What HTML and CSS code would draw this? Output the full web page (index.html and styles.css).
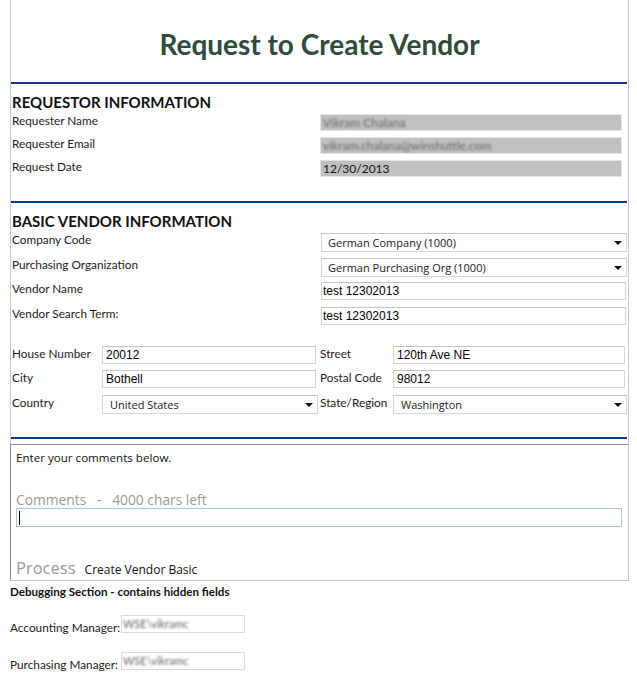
FILE: index.html
```html
<!DOCTYPE html>
<html lang="en">
<head>
  <meta charset="UTF-8" />
  <title>Request to Create Vendor</title>
  <link rel="stylesheet" href="styles.css">
</head>
<body>

  <div class="form">
    <h1 class="title">Request to Create Vendor</h1>
    <div class="rule"></div>

    <h2 class="section">REQUESTOR INFORMATION</h2>
    <div class="rows requestor">
      <div class="row">
        <label>Requester Name</label>
        <div class="readonly"><span class="blur">Vikram Chalana</span></div>
      </div>
      <div class="row">
        <label>Requester Email</label>
        <div class="readonly"><span class="blur">vikram.chalana@winshuttle.com</span></div>
      </div>
      <div class="row">
        <label>Request Date</label>
        <div class="readonly">12/30/2013</div>
      </div>
    </div>

    <div class="rule rule-2"></div>

    <h2 class="section">BASIC VENDOR INFORMATION</h2>
    <div class="rows vendor">
      <div class="row">
        <label>Company Code</label>
        <div class="select">German Company (1000)</div>
      </div>
      <div class="row">
        <label>Purchasing Organization</label>
        <div class="select">German Purchasing Org (1000)</div>
      </div>
      <div class="row">
        <label>Vendor Name</label>
        <input class="text" type="text" value="test 12302013" />
      </div>
      <div class="row">
        <label>Vendor Search Term:</label>
        <input class="text" type="text" value="test 12302013" />
      </div>
    </div>

    <div class="address">
      <label>House Number</label>
      <input class="text addr" type="text" value="20012" />
      <label class="second">Street</label>
      <input class="text addr" type="text" value="120th Ave NE" />

      <label>City</label>
      <input class="text addr" type="text" value="Bothell" />
      <label class="second">Postal Code</label>
      <input class="text addr" type="text" value="98012" />

      <label>Country</label>
      <div class="select wide">United States</div>
      <label class="second">State/Region</label>
      <div class="select wide">Washington</div>
    </div>

    <div class="rule rule-3"></div>

    <div class="comments-box">
      <div class="hint">Enter your comments below.</div>
      <div class="comments-label">Comments   -   4000 chars left</div>
      <div class="comments-input"><span class="caret"></span></div>
      <div class="process"><span class="process-label">Process</span> Create Vendor Basic</div>
    </div>
  </div>

  <div class="debug">
    <div class="debug-title">Debugging Section - contains hidden fields</div>
    <div class="debug-row">
      <label>Accounting Manager:</label>
      <div class="hidden-field"><span class="blur">WSE\vikramc</span></div>
    </div>
    <div class="debug-row">
      <label>Purchasing Manager:</label>
      <div class="hidden-field"><span class="blur">WSE\vikramc</span></div>
    </div>
  </div>

</body>
</html>
```

FILE: styles.css
```css
* {
  margin: 0;
  padding: 0;
  box-sizing: border-box;
}

body {
  background: #fff;
  color: #1a1a1a;
  font-family: Lato, 'Open Sans', sans-serif;
  font-size: 11.8px;
}

.form {
  margin-left: 10px;
  width: 619px;
  border-left: 1px solid #c8c8c8;
  border-right: 1px solid #c8c8c8;
}

.title {
  height: 82px;
  line-height: 88px;
  text-align: center;
  font-size: 28px;
  font-weight: bold;
  color: #2f4b3b;
}

.rule {
  height: 2px;
  margin-right: 1px;
  background: #0e3a8e;
}

.rule-2 {
  margin-top: 19px;
}

.rule-3 {
  margin-top: 18px;
}

.section {
  margin-top: 9px;
  padding-left: 1px;
  height: 18px;
  line-height: 18px;
  font-size: 15px;
  font-weight: bold;
  color: #111;
}

.rows {
  padding-left: 1px;
}

.row {
  display: grid;
  grid-template-columns: 308px 1fr;
  align-items: start;
}

.row label {
  line-height: 14px;
}

/* requestor: grey read-only boxes */
.requestor {
  margin-top: 2px;
}

.requestor .row {
  height: 23px;
  padding-top: 1px;
}

.readonly {
  width: 302px;
  height: 17px;
  line-height: 15px;
  padding-left: 2px;
  background: #c0c0c0;
  border: 1px solid #e4e4e4;
  font-size: 12px;
  color: #111;
}

.blur {
  display: inline-block;
  color: #666;
  filter: blur(1.1px);
}

/* basic vendor rows */
.vendor {
  margin-top: 2px;
}

.vendor .row {
  height: 24.5px;
  padding-top: 1px;
  grid-template-columns: 309px 1fr;
}

.select {
  position: relative;
  width: 306px;
  height: 19px;
  line-height: 17px;
  padding-left: 6px;
  background: #fff;
  border: 1px solid #d6d6d6;
  border-top-color: #c4c4c4;
  font-family: 'Open Sans', sans-serif;
  font-size: 11px;
  color: #1a1a1a;
}

.select::after {
  content: '';
  position: absolute;
  right: 4px;
  top: 7px;
  border-left: 4px solid transparent;
  border-right: 4px solid transparent;
  border-top: 4px solid #111;
}

.text {
  display: block;
  width: 305px;
  height: 18px;
  padding: 0 1px;
  border: 1px solid #d6d6d6;
  border-top-color: #c4c4c4;
  background: #fff;
  font-family: 'Liberation Sans', Arial, sans-serif;
  font-size: 12px;
  color: #000;
  outline: none;
}

/* address block */
.address {
  margin-top: 15.5px;
  padding-left: 1px;
  display: grid;
  grid-template-columns: 90px 216px 75px 234px;
  grid-auto-rows: 24.5px;
  align-items: start;
}

.address label {
  line-height: 13px;
  padding-top: 1px;
}

.address label.second {
  padding-left: 2px;
}

.text.addr {
  width: calc(100% - 2px);
  padding: 0 3px;
}

.select.wide {
  width: 100%;
  padding-left: 7px;
}

/* comments */
.comments-box {
  margin-top: 5px;
  margin-left: -1px;
  margin-right: -1px;
  height: 137px;
  border: 1px solid #c8c8c8;
  border-top-color: #8c8c8c;
  border-left-color: #8c8c8c;
  padding: 5px 5px 0 5px;
  font-family: 'Open Sans', sans-serif;
}

.hint {
  line-height: 15px;
  font-size: 11.6px;
  color: #111;
}

.comments-label {
  margin-top: 26px;
  line-height: 17px;
  font-size: 13.8px;
  color: #9a9a9a;
  white-space: pre;
}

.comments-input {
  height: 19px;
  width: 606px;
  border: 1px solid #a8c4de;
  padding: 2px 2px;
}

.caret {
  display: block;
  width: 1px;
  height: 14px;
  background: #000;
}

.process {
  margin-top: 31px;
  line-height: 20px;
  font-size: 12px;
  color: #111;
}

.process-label {
  font-size: 16.5px;
  color: #9a9a9a;
  margin-right: 6px;
}

/* debugging */
.debug {
  padding-left: 10px;
}

.debug-title {
  margin-top: 4px;
  line-height: 14px;
  font-size: 11.6px;
  font-weight: bold;
  color: #111;
}

.debug-row {
  display: flex;
  align-items: flex-start;
  margin-top: 16px;
  height: 21px;
}

.debug-row label {
  margin-top: 6px;
  line-height: 14px;
  width: 111px;
}

.hidden-field {
  width: 124px;
  height: 18px;
  line-height: 16px;
  padding-left: 1px;
  border: 1px solid #dcdcdc;
  font-size: 11px;
}
```
